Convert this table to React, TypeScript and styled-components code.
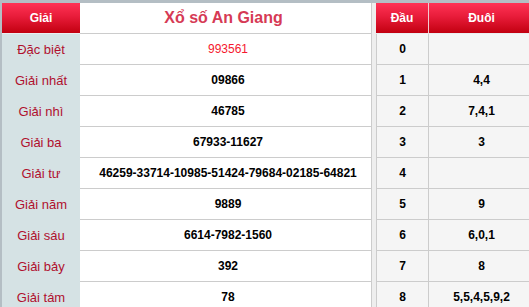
import React from "react";
import styled, { createGlobalStyle } from "styled-components";

const Global = createGlobalStyle`
  html, body { margin: 0; padding: 0; background: #fff; overflow: hidden; }
  body { font-family: "Liberation Sans", Arial, sans-serif; }
`;

const Frame = styled.div`
  width: 540px;
  display: flex;
  align-items: flex-start;
  background: #eeeeee;
  border-top: 3px solid #b4bec4;
  border-left: 2px solid #b4bec4;
`;

const ResultTable = styled.div`
  width: 369px;
  display: grid;
  grid-template-columns: 78px 291px;
  border-right: 1px solid #cccccc;
  background: #fff;
`;

const Gap = styled.div`
  width: 4px;
  align-self: stretch;
  background: #eeeeee;
`;

const LotoTable = styled.div`
  width: 158px;
  display: grid;
  grid-template-columns: 53px 105px;
  background: #f5f5f5;
`;

const RedHead = styled.div<{ $divider?: boolean }>`
  height: 30px;
  display: flex;
  align-items: center;
  justify-content: center;
  color: #fff;
  font-weight: bold;
  font-size: 12px;
  background: linear-gradient(to bottom, #ff3355 0%, #e81c3a 45%, #c20010 100%);
  border-right: ${(p) => (p.$divider ? "1px solid #f3c9cf" : "none")};
  border-bottom: 1px solid #e9eef0;
`;

const TitleCell = styled.div`
  height: 30px;
  display: flex;
  align-items: center;
  justify-content: center;
  padding-right: 4px;
  border-bottom: 1px solid #cccccc;
  color: #d63a55;
  font-weight: bold;
  font-size: 16px;
`;

const LabelCell = styled.div`
  height: 31px;
  display: flex;
  align-items: center;
  justify-content: center;
  background: #d5e2e4;
  color: #b0102e;
  font-size: 13px;
`;

const ValueCell = styled.div<{ $special?: boolean }>`
  height: 30px;
  display: flex;
  align-items: center;
  justify-content: center;
  padding-left: 5px;
  border-bottom: 1px solid #cccccc;
  color: ${(p) => (p.$special ? "#f5182e" : "#000")};
  font-weight: ${(p) => (p.$special ? "normal" : "bold")};
  font-size: 12px;
`;

const LotoCell = styled.div<{ $first?: boolean }>`
  height: 30px;
  display: flex;
  align-items: center;
  justify-content: center;
  border-bottom: 1px solid #cccccc;
  border-left: ${(p) => (p.$first ? "1px solid #cccccc" : "none")};
  border-right: ${(p) => (p.$first ? "1px solid #cccccc" : "none")};
  color: #000;
  font-weight: bold;
  font-size: 12px;
`;

const prizes: { label: string; value: string; special?: boolean }[] = [
  { label: "Đặc biệt", value: "993561", special: true },
  { label: "Giải nhất", value: "09866" },
  { label: "Giải nhì", value: "46785" },
  { label: "Giải ba", value: "67933-11627" },
  { label: "Giải tư", value: "46259-33714-10985-51424-79684-02185-64821" },
  { label: "Giải năm", value: "9889" },
  { label: "Giải sáu", value: "6614-7982-1560" },
  { label: "Giải bảy", value: "392" },
  { label: "Giải tám", value: "78" },
];

const loto = ["", "4,4", "7,4,1", "3", "", "9", "6,0,1", "8", "5,5,4,5,9,2"];

export default function App() {
  return (
    <>
      <Global />
      <Frame>
        <ResultTable>
          <RedHead>Giải</RedHead>
          <TitleCell>Xổ số An Giang</TitleCell>
          {prizes.map((p) => (
            <React.Fragment key={p.label}>
              <LabelCell>{p.label}</LabelCell>
              <ValueCell $special={p.special}>{p.value}</ValueCell>
            </React.Fragment>
          ))}
        </ResultTable>
        <Gap />
        <LotoTable>
          <RedHead $divider>Đầu</RedHead>
          <RedHead>Đuôi</RedHead>
          {loto.map((tail, i) => (
            <React.Fragment key={i}>
              <LotoCell $first>{i}</LotoCell>
              <LotoCell>{tail}</LotoCell>
            </React.Fragment>
          ))}
        </LotoTable>
      </Frame>
    </>
  );
}
